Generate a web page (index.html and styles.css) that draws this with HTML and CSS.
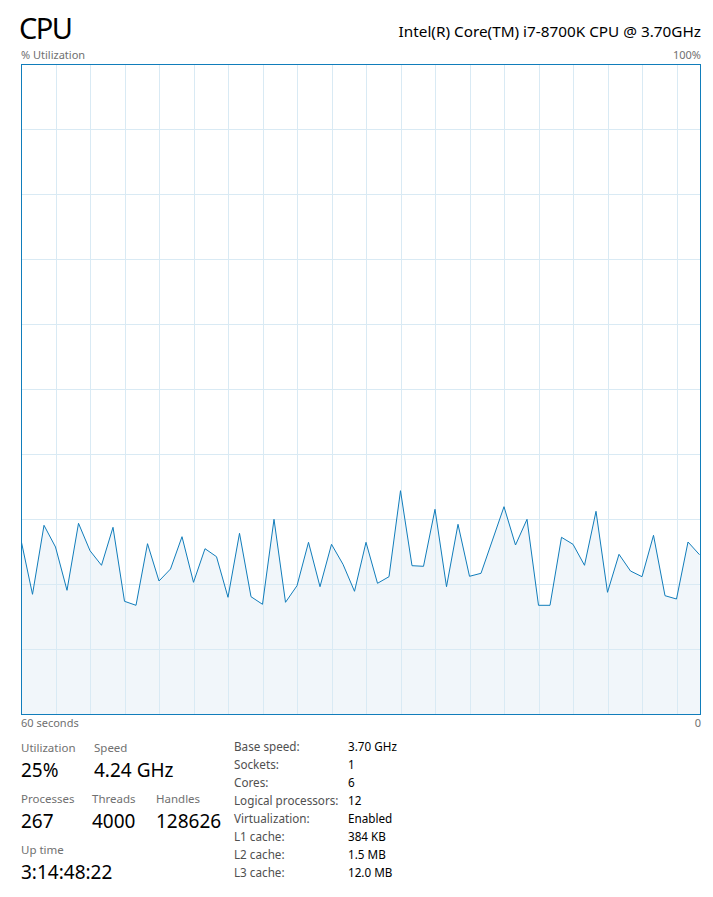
FILE: index.html
```html
<!DOCTYPE html>
<html lang="en">
<head>
  <meta charset="UTF-8">
  <title>CPU</title>
  <link rel="stylesheet" href="styles.css">
</head>
<body>

  <div class="perf">
    <div class="head">
      <h1>CPU</h1>
      <div class="cpu-name">Intel(R) Core(TM) i7-8700K CPU @ 3.70GHz</div>
    </div>

    <div class="axis axis-top">
      <span>% Utilization</span>
      <span>100%</span>
    </div>

    <div class="chart">
      <svg width="680" height="651" viewBox="0 0 680 651">
        <polygon class="fill" points="0,476 11.5,530.3 23,461.3 34.5,483 46,526.3 57.5,459.3 69,486.7 80.5,501.3 92,463.3 103.5,537.3 115,541.3 126.5,479.7 138,517 149.5,505 161,472.7 172.5,518.3 184,484.7 195.5,492.7 207,533.3 218.5,469.3 230,532.7 241.5,540.3 253,455.3 264.5,538.3 276,521.7 287.5,478.3 299,522.7 310.5,480.3 322,500.3 333.5,527.3 345,478.3 356.5,519.3 368,512.7 379.5,426.7 391,501.7 402.5,502.3 414,445.3 425.5,522.7 437,460.3 448.5,512.3 460,509.3 471.5,476 483,442.7 494.5,481 506,455.3 517.5,541.3 529,541.3 540.5,473.3 552,480.3 563.5,501.3 575,447.3 586.5,528.3 598,490.3 609.5,507 621,512.7 632.5,471.3 644,531.7 655.5,535 667,478 678.5,490.7 679,650 0,650"/>
        <g class="grid">
          <line x1="0" y1="65.5" x2="680" y2="65.5"/>
          <line x1="0" y1="130.5" x2="680" y2="130.5"/>
          <line x1="0" y1="195.5" x2="680" y2="195.5"/>
          <line x1="0" y1="260.5" x2="680" y2="260.5"/>
          <line x1="0" y1="325.5" x2="680" y2="325.5"/>
          <line x1="0" y1="390.5" x2="680" y2="390.5"/>
          <line x1="0" y1="455.5" x2="680" y2="455.5"/>
          <line x1="0" y1="520.5" x2="680" y2="520.5"/>
          <line x1="0" y1="585.5" x2="680" y2="585.5"/>
          <line x1="35.5" y1="0" x2="35.5" y2="651"/>
          <line x1="69.5" y1="0" x2="69.5" y2="651"/>
          <line x1="104.5" y1="0" x2="104.5" y2="651"/>
          <line x1="138.5" y1="0" x2="138.5" y2="651"/>
          <line x1="173.5" y1="0" x2="173.5" y2="651"/>
          <line x1="207.5" y1="0" x2="207.5" y2="651"/>
          <line x1="242.5" y1="0" x2="242.5" y2="651"/>
          <line x1="276.5" y1="0" x2="276.5" y2="651"/>
          <line x1="311.5" y1="0" x2="311.5" y2="651"/>
          <line x1="345.5" y1="0" x2="345.5" y2="651"/>
          <line x1="380.5" y1="0" x2="380.5" y2="651"/>
          <line x1="414.5" y1="0" x2="414.5" y2="651"/>
          <line x1="449.5" y1="0" x2="449.5" y2="651"/>
          <line x1="483.5" y1="0" x2="483.5" y2="651"/>
          <line x1="518.5" y1="0" x2="518.5" y2="651"/>
          <line x1="552.5" y1="0" x2="552.5" y2="651"/>
          <line x1="587.5" y1="0" x2="587.5" y2="651"/>
          <line x1="621.5" y1="0" x2="621.5" y2="651"/>
          <line x1="656.5" y1="0" x2="656.5" y2="651"/>
        </g>
        <polyline class="line" points="0,476 11.5,530.3 23,461.3 34.5,483 46,526.3 57.5,459.3 69,486.7 80.5,501.3 92,463.3 103.5,537.3 115,541.3 126.5,479.7 138,517 149.5,505 161,472.7 172.5,518.3 184,484.7 195.5,492.7 207,533.3 218.5,469.3 230,532.7 241.5,540.3 253,455.3 264.5,538.3 276,521.7 287.5,478.3 299,522.7 310.5,480.3 322,500.3 333.5,527.3 345,478.3 356.5,519.3 368,512.7 379.5,426.7 391,501.7 402.5,502.3 414,445.3 425.5,522.7 437,460.3 448.5,512.3 460,509.3 471.5,476 483,442.7 494.5,481 506,455.3 517.5,541.3 529,541.3 540.5,473.3 552,480.3 563.5,501.3 575,447.3 586.5,528.3 598,490.3 609.5,507 621,512.7 632.5,471.3 644,531.7 655.5,535 667,478 678.5,490.7"/>
        <rect class="frame" x="0.5" y="0.5" width="679" height="650"/>
      </svg>
    </div>

    <div class="axis axis-bottom">
      <span>60 seconds</span>
      <span>0</span>
    </div>

    <div class="stats">
      <div class="dynamic">
        <div class="stat-row row-usage">
          <div class="stat">
            <div class="stat-label">Utilization</div>
            <div class="stat-value">25%</div>
          </div>
          <div class="stat">
            <div class="stat-label">Speed</div>
            <div class="stat-value">4.24 GHz</div>
          </div>
        </div>
        <div class="stat-row row-counts">
          <div class="stat">
            <div class="stat-label">Processes</div>
            <div class="stat-value">267</div>
          </div>
          <div class="stat">
            <div class="stat-label">Threads</div>
            <div class="stat-value">4000</div>
          </div>
          <div class="stat">
            <div class="stat-label">Handles</div>
            <div class="stat-value">128626</div>
          </div>
        </div>
        <div class="stat-row">
          <div class="stat">
            <div class="stat-label">Up time</div>
            <div class="stat-value">3:14:48:22</div>
          </div>
        </div>
      </div>

      <div class="specs">
        <span class="spec-label">Base speed:</span><span class="spec-value">3.70 GHz</span>
        <span class="spec-label">Sockets:</span><span class="spec-value">1</span>
        <span class="spec-label">Cores:</span><span class="spec-value">6</span>
        <span class="spec-label">Logical processors:</span><span class="spec-value">12</span>
        <span class="spec-label">Virtualization:</span><span class="spec-value">Enabled</span>
        <span class="spec-label">L1 cache:</span><span class="spec-value">384 KB</span>
        <span class="spec-label">L2 cache:</span><span class="spec-value">1.5 MB</span>
        <span class="spec-label">L3 cache:</span><span class="spec-value">12.0 MB</span>
      </div>
    </div>
  </div>

</body>
</html>
```

FILE: styles.css
```css
body {
    margin: 0;
    background-color: #fff;
    font-family: "Segoe UI", "Noto Sans", sans-serif;
    color: #000;
}

.perf {
    width: 680px;
    padding: 8px 12px 0 21px;
}

.head {
    display: flex;
    justify-content: space-between;
    align-items: flex-end;
    height: 36px;
}

.head h1 {
    margin: 0 0 3px -2px;
    font-size: 29px;
    font-weight: normal;
    line-height: 26px;
    letter-spacing: -1.5px;
}

.cpu-name {
    font-size: 15.3px;
    line-height: 18px;
    margin-bottom: 4px;
}

.axis {
    display: flex;
    justify-content: space-between;
    font-size: 11px;
    color: #707070;
    line-height: 14px;
}

.axis-top {
    margin-top: 4px;
    height: 16px;
}

.axis-bottom {
    height: 20px;
    padding-top: 1px;
}

.chart svg {
    display: block;
}

.chart .fill {
    fill: #f1f6fa;
}

.chart .grid line {
    stroke: #d9eaf4;
    stroke-width: 1;
}

.chart .line {
    fill: none;
    stroke: #117dbb;
    stroke-width: 1;
}

.chart .frame {
    fill: none;
    stroke: #117dbb;
    stroke-width: 1;
}

.stats {
    display: flex;
    margin-top: 4px;
}

.dynamic {
    width: 213px;
}

.stat-row {
    display: grid;
    grid-template-columns: auto;
    height: 51px;
}

.row-usage {
    grid-template-columns: 73px auto;
}

.row-counts {
    grid-template-columns: 71px 64px auto;
}

.stat-label {
    font-size: 11.5px;
    color: #707070;
    line-height: 16px;
}

.stat-value {
    font-size: 19px;
    line-height: 26px;
    margin-top: 1px;
}

.specs {
    display: grid;
    grid-template-columns: 114px auto;
    grid-auto-rows: 18px;
    font-size: 11.7px;
    line-height: 18px;
    margin-top: -3px;
}

.spec-label {
    color: #505050;
}
```
